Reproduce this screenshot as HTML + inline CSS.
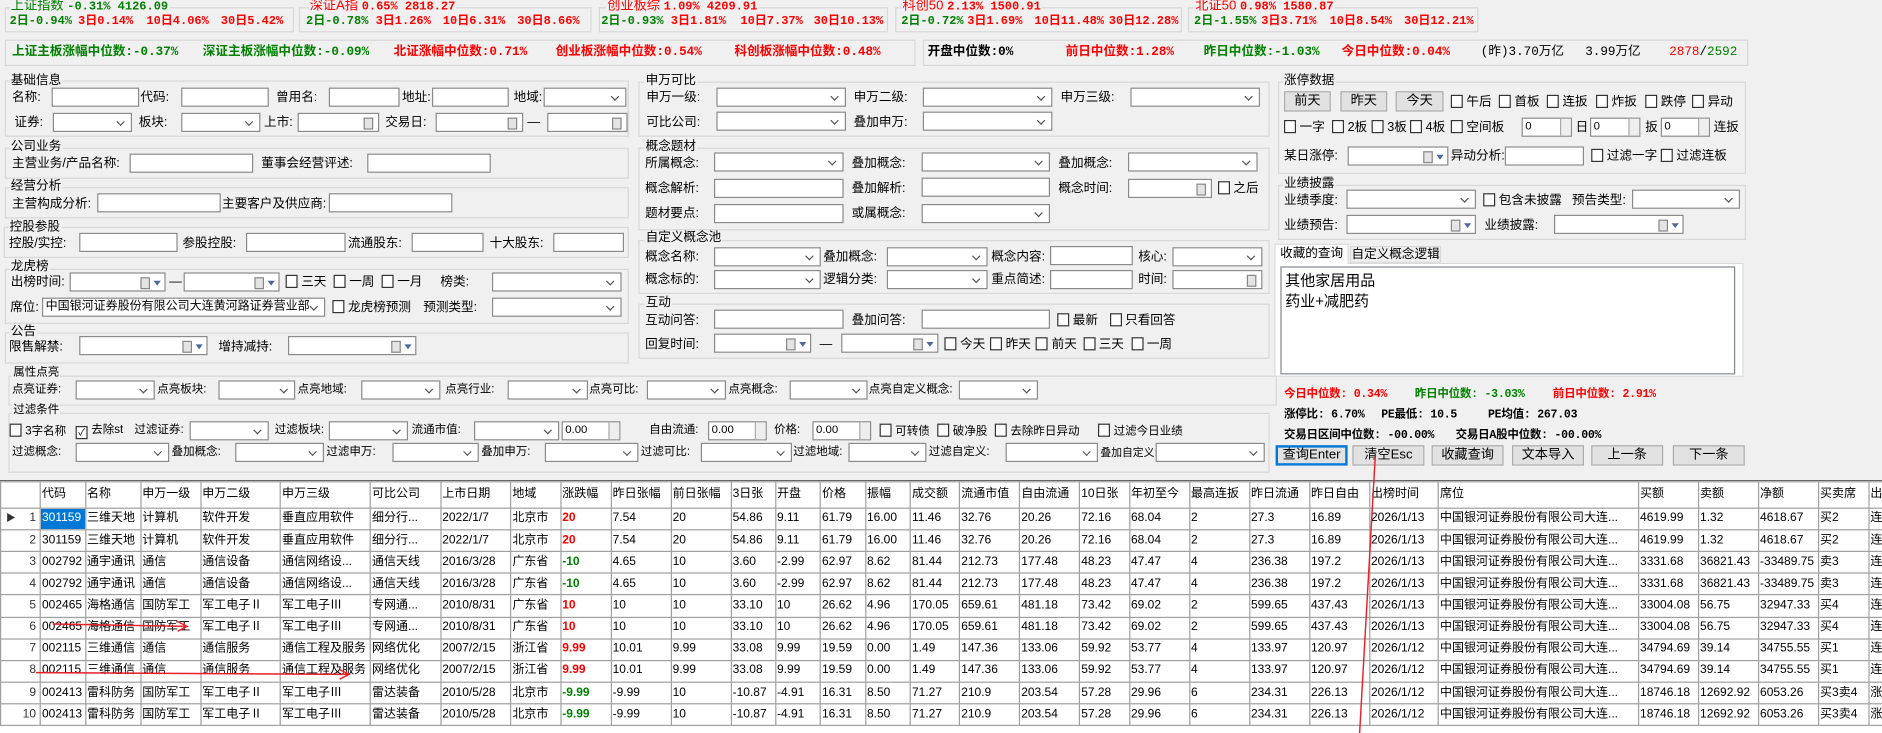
<!DOCTYPE html>
<html><head><meta charset="utf-8">
<style>
body{margin:0;background:#f0f0f0;width:1882px;height:733px;overflow:hidden;font-family:"Liberation Sans","Noto Sans CJK SC",sans-serif}
#w{position:absolute;left:0;top:0;width:1569px;height:611px;transform:scale(1.2);transform-origin:0 0;font-size:10.5px;color:#000;overflow:hidden}
#w>*{position:absolute;white-space:nowrap;box-sizing:border-box}
#w>span{line-height:12px}
.g{border:1px solid #d8d8d8}
.cap{background:#f0f0f0;padding:0 1px}
.i,.s,.d,.sp{background:#fff;border:1px solid #8a8a8a;height:16px}
.s::after{content:"";position:absolute;right:6px;top:4px;width:4px;height:4px;border-right:1px solid #555;border-bottom:1px solid #555;transform:rotate(45deg)}
.d::after{content:"";position:absolute;right:4px;top:3px;width:6px;height:8px;border:1px solid #888;background:#e4e4e4}
.dt::after{right:12px}
.dt::before{content:"";position:absolute;right:3px;top:6px;border-left:3px solid transparent;border-right:3px solid transparent;border-top:4px solid #4a6a9a}
.sp{font-size:9.5px;padding-left:2px;line-height:13px}
.sp::after{content:"";position:absolute;right:0;top:0;width:8px;height:14px;background:#eee;border-left:1px solid #aaa}
.c::before{content:"";display:inline-block;width:8px;height:9px;border:1px solid #333;background:#fff;margin-right:3px;vertical-align:-2px}
.k::before{content:"✓";font-size:8px;line-height:9px;text-align:center}
.b{background:#e1e1e1;border:1px solid #adadad;text-align:center;font-size:11px;height:17px;line-height:15px}
.m{font-family:"Liberation Mono","Noto Sans CJK SC",monospace;font-weight:bold;font-size:10px}
.r{color:#f00}.gr{color:#008000}
.st{font-family:"Liberation Mono","Noto Sans CJK SC",monospace;font-weight:bold;font-size:10.5px}
.st2{font-family:"Liberation Mono","Noto Sans CJK SC",monospace;font-weight:bold;font-size:9.6px;letter-spacing:-0.2px}
.f{font-size:9.6px}
table{border-collapse:collapse;table-layout:fixed;background:#fff;font-size:10px}
td{border:1px solid #a0a0a0;height:17.17px;padding:0 0 0 1px;overflow:hidden;white-space:nowrap;line-height:12px}
tr.h td{height:21.3px}
td.n{text-align:right;padding-right:3px;color:#333}
.sel{background:#0078d7;color:#fff}
.R{color:#f00;font-weight:bold}.G{color:#008000;font-weight:bold}
</style></head><body><div id="w">

<div class="g" style="left:4px;top:6px;width:241px;height:21px"></div>
<div class="g" style="left:249px;top:6px;width:244px;height:21px"></div>
<div class="g" style="left:499px;top:6px;width:241px;height:21px"></div>
<div class="g" style="left:746px;top:6px;width:239px;height:21px"></div>
<div class="g" style="left:990px;top:6px;width:242px;height:21px"></div>
<span class="cap gr" style="left:8px;top:-1px;font-size:11px">上证指数 <b class="m">-0.31% 4126.09</b></span>
<span class="cap r" style="left:257px;top:-1px;font-size:11px">深证A指 <b class="m">0.65% 2818.27</b></span>
<span class="cap r" style="left:505px;top:-1px;font-size:11px">创业板综 <b class="m">1.09% 4209.91</b></span>
<span class="cap r" style="left:751px;top:-1px;font-size:11px">科创50 <b class="m">2.13% 1500.91</b></span>
<span class="cap r" style="left:995px;top:-1px;font-size:11px">北证50 <b class="m">0.98% 1580.87</b></span>
<span class="m gr" style="left:8px;top:13px">2日-0.94%</span><span class="m r" style="left:65px;top:13px">3日0.14%</span><span class="m r" style="left:122px;top:13px">10日4.06%</span><span class="m r" style="left:184px;top:13px">30日5.42%</span>
<span class="m gr" style="left:255px;top:13px">2日-0.78%</span><span class="m r" style="left:313px;top:13px">3日1.26%</span><span class="m r" style="left:369px;top:13px">10日6.31%</span><span class="m r" style="left:431px;top:13px">30日8.66%</span>
<span class="m gr" style="left:501px;top:13px">2日-0.93%</span><span class="m r" style="left:559px;top:13px">3日1.81%</span><span class="m r" style="left:617px;top:13px">10日7.37%</span><span class="m r" style="left:678px;top:13px">30日10.13%</span>
<span class="m gr" style="left:751px;top:13px">2日-0.72%</span><span class="m r" style="left:806px;top:13px">3日1.69%</span><span class="m r" style="left:862px;top:13px">10日11.48%</span><span class="m r" style="left:924px;top:13px">30日12.28%</span>
<span class="m gr" style="left:995px;top:13px">2日-1.55%</span><span class="m r" style="left:1051px;top:13px">3日3.71%</span><span class="m r" style="left:1108px;top:13px">10日8.54%</span><span class="m r" style="left:1170px;top:13px">30日12.21%</span>

<div class="g" style="left:4px;top:33px;width:759px;height:22px"></div>
<div class="g" style="left:769px;top:33px;width:688px;height:22px"></div>
<span class="st gr" style="left:10px;top:38px">上证主板涨幅中位数:-0.37%</span>
<span class="st gr" style="left:169px;top:38px">深证主板涨幅中位数:-0.09%</span>
<span class="st r" style="left:328px;top:38px">北证涨幅中位数:0.71%</span>
<span class="st r" style="left:463px;top:38px">创业板涨幅中位数:0.54%</span>
<span class="st r" style="left:612px;top:38px">科创板涨幅中位数:0.48%</span>
<span class="st" style="left:773px;top:38px">开盘中位数:0%</span>
<span class="st r" style="left:888px;top:38px">前日中位数:1.28%</span>
<span class="st gr" style="left:1003px;top:38px">昨日中位数:-1.03%</span>
<span class="st r" style="left:1118px;top:38px">今日中位数:0.04%</span>
<span class="st" style="left:1234px;top:38px;font-weight:normal">(昨)3.70万亿</span>
<span class="st" style="left:1321px;top:38px;font-weight:normal">3.99万亿</span>
<span class="st" style="left:1391px;top:38px;font-weight:normal"><span class="r">2878</span>/<span class="gr">2592</span></span>

<div class="g" style="left:4px;top:67px;width:520px;height:47px"></div>
<span class="cap" style="left:8px;top:61px">基础信息</span>
<span style="left:10px;top:74.5px">名称:</span><div class="i" style="left:42.5px;top:72.5px;width:73px"></div>
<span style="left:117px;top:74.5px">代码:</span><div class="i" style="left:150.7px;top:72.5px;width:73px"></div>
<span style="left:230px;top:74.5px">曾用名:</span><div class="i" style="left:273.8px;top:72.5px;width:59px"></div>
<span style="left:335px;top:74.5px">地址:</span><div class="i" style="left:359.5px;top:72.5px;width:64px"></div>
<span style="left:428px;top:74.5px">地域:</span><div class="s" style="left:453px;top:72.5px;width:69px"></div>
<span style="left:12px;top:95.5px">证券:</span><div class="s" style="left:44px;top:93.5px;width:66px"></div>
<span style="left:115.6px;top:95.5px">板块:</span><div class="s" style="left:150.7px;top:93.5px;width:66px"></div>
<span style="left:220px;top:95.5px">上市:</span><div class="d" style="left:247.6px;top:93.5px;width:68px"></div>
<span style="left:321px;top:95.5px">交易日:</span><div class="d" style="left:363px;top:93.5px;width:73px"></div>
<span style="left:439.5px;top:95.5px">—</span><div class="d" style="left:455.8px;top:93.5px;width:67px"></div>

<div class="g" style="left:4px;top:123px;width:520px;height:26px"></div>
<span class="cap" style="left:8px;top:116px">公司业务</span>
<span style="left:10px;top:130px">主营业务/产品名称:</span><div class="i" style="left:108px;top:128px;width:103px"></div>
<span style="left:217.7px;top:130px">董事会经营评述:</span><div class="i" style="left:306px;top:128px;width:103px"></div>

<div class="g" style="left:4px;top:156px;width:520px;height:26px"></div>
<span class="cap" style="left:8px;top:149px">经营分析</span>
<span style="left:10px;top:163.5px">主营构成分析:</span><div class="i" style="left:80.6px;top:161px;width:103px"></div>
<span style="left:185px;top:163.5px">主要客户及供应商:</span><div class="i" style="left:273.8px;top:161px;width:103px"></div>

<div class="g" style="left:3px;top:189px;width:521px;height:26px"></div>
<span class="cap" style="left:7px;top:182.5px">控股参股</span>
<span style="left:7.5px;top:196.5px">控股/实控:</span><div class="i" style="left:66.3px;top:194px;width:82px"></div>
<span style="left:152px;top:196.5px">参股控股:</span><div class="i" style="left:205px;top:194px;width:83px"></div>
<span style="left:290px;top:196.5px">流通股东:</span><div class="i" style="left:342.5px;top:194px;width:60px"></div>
<span style="left:408px;top:196.5px">十大股东:</span><div class="i" style="left:461px;top:194px;width:59px"></div>

<div class="g" style="left:4px;top:223.5px;width:520px;height:46px"></div>
<span class="cap" style="left:8px;top:216px">龙虎榜</span>
<span style="left:9px;top:229px">出榜时间:</span><div class="d dt" style="left:57.8px;top:226.7px;width:80.6px"></div>
<span style="left:141px;top:229px">—</span><div class="d dt" style="left:152.7px;top:226.7px;width:80.6px"></div>
<span class="c" style="left:238px;top:229px">三天</span><span class="c" style="left:278px;top:229px">一周</span><span class="c" style="left:318px;top:229px">一月</span>
<span style="left:367px;top:229px">榜类:</span><div class="s" style="left:410px;top:227px;width:107.7px"></div>
<span style="left:8.5px;top:250px">席位:</span><div class="s" style="left:35px;top:248px;width:236px;font-size:10px;line-height:14px;padding-left:2px">中国银河证券股份有限公司大连黄河路证券营业部</div>
<span class="c" style="left:277px;top:250px">龙虎榜预测</span>
<span style="left:352.7px;top:250px">预测类型:</span><div class="s" style="left:410px;top:248px;width:107.7px"></div>

<div class="g" style="left:4px;top:277px;width:520px;height:26px"></div>
<span class="cap" style="left:8px;top:270px">公告</span>
<span style="left:7.5px;top:282.5px">限售解禁:</span><div class="d dt" style="left:66.3px;top:280px;width:107px"></div>
<span style="left:182px;top:282.5px">增持减持:</span><div class="d dt" style="left:239.8px;top:280px;width:107px"></div>

<div class="g" style="left:532px;top:68px;width:526px;height:46px"></div>
<span class="cap" style="left:537px;top:61px">申万可比</span>
<span style="left:538.6px;top:74.5px">申万一级:</span><div class="s" style="left:597px;top:72.5px;width:107.6px"></div>
<span style="left:711.4px;top:74.5px">申万二级:</span><div class="s" style="left:769px;top:72.5px;width:108px"></div>
<span style="left:883.8px;top:74.5px">申万三级:</span><div class="s" style="left:941.7px;top:72.5px;width:108px"></div>
<span style="left:538.6px;top:95.5px">可比公司:</span><div class="s" style="left:597px;top:93px;width:107.6px"></div>
<span style="left:711.4px;top:95.5px">叠加申万:</span><div class="s" style="left:769px;top:93px;width:108px"></div>

<div class="g" style="left:532px;top:123px;width:526px;height:69px"></div>
<span class="cap" style="left:537px;top:116px">概念题材</span>
<span style="left:537.6px;top:129.5px">所属概念:</span><div class="s" style="left:595px;top:127px;width:107.6px"></div>
<span style="left:709.7px;top:129.5px">叠加概念:</span><div class="s" style="left:767.5px;top:127px;width:107.8px"></div>
<span style="left:882px;top:129.5px">叠加概念:</span><div class="s" style="left:940px;top:127px;width:108px"></div>
<span style="left:537.6px;top:151px">概念解析:</span><div class="i" style="left:595px;top:149px;width:107.6px"></div>
<span style="left:709.7px;top:151px">叠加解析:</span><div class="i" style="left:767.5px;top:148px;width:107.8px"></div>
<span style="left:882px;top:151px">概念时间:</span><div class="d" style="left:940px;top:149px;width:70px"></div>
<span class="c" style="left:1014.8px;top:151px">之后</span>
<span style="left:537.6px;top:172px">题材要点:</span><div class="i" style="left:595px;top:170px;width:107.6px"></div>
<span style="left:709.7px;top:172px">或属概念:</span><div class="s" style="left:767.5px;top:170px;width:107.8px"></div>

<div class="g" style="left:532px;top:199.5px;width:526px;height:45px"></div>
<span class="cap" style="left:537px;top:192px">自定义概念池</span>
<span style="left:537.6px;top:207.5px">概念名称:</span><div class="s" style="left:595px;top:205.6px;width:88.5px"></div>
<span style="left:686px;top:207.5px">叠加概念:</span><div class="s" style="left:739px;top:205.6px;width:84px"></div>
<span style="left:826px;top:207.5px">概念内容:</span><div class="i" style="left:875.3px;top:205px;width:69px"></div>
<span style="left:948.5px;top:207.5px">核心:</span><div class="s" style="left:976.7px;top:205.6px;width:75px"></div>
<span style="left:537.6px;top:227px">概念标的:</span><div class="s" style="left:595px;top:225px;width:88.5px"></div>
<span style="left:686px;top:227px">逻辑分类:</span><div class="s" style="left:739px;top:225px;width:84px"></div>
<span style="left:826px;top:227px">重点简述:</span><div class="i" style="left:875.3px;top:224.5px;width:69px"></div>
<span style="left:948.5px;top:227px">时间:</span><div class="d" style="left:976.7px;top:225px;width:75px"></div>

<div class="g" style="left:532px;top:253px;width:526px;height:46px"></div>
<span class="cap" style="left:537px;top:245.5px">互动</span>
<span style="left:537.6px;top:260.5px">互动问答:</span><div class="i" style="left:595px;top:258px;width:107.6px"></div>
<span style="left:709.7px;top:260.5px">叠加问答:</span><div class="i" style="left:767.5px;top:258px;width:107.8px"></div>
<span class="c" style="left:881px;top:260.5px">最新</span><span class="c" style="left:924.6px;top:260.5px">只看回答</span>
<span style="left:537.6px;top:280.5px">回复时间:</span><div class="d dt" style="left:595px;top:278.3px;width:81px"></div>
<span style="left:683px;top:280.5px">—</span><div class="d dt" style="left:701px;top:278.3px;width:81px"></div>
<span class="c" style="left:787px;top:280.5px">今天</span><span class="c" style="left:825px;top:280.5px">昨天</span><span class="c" style="left:863.4px;top:280.5px">前天</span><span class="c" style="left:902.6px;top:280.5px">三天</span><span class="c" style="left:942.7px;top:280.5px">一周</span>

<div class="g" style="left:1065px;top:68px;width:390px;height:77px"></div>
<span class="cap" style="left:1069px;top:61px">涨停数据</span>
<div class="b" style="left:1070px;top:76.4px;width:39px">前天</div>
<div class="b" style="left:1117px;top:76.4px;width:39px">昨天</div>
<div class="b" style="left:1163px;top:76.4px;width:40px">今天</div>
<span class="c" style="left:1209px;top:79px">午后</span><span class="c" style="left:1249px;top:79px">首板</span><span class="c" style="left:1289px;top:79px">连扳</span><span class="c" style="left:1330px;top:79px">炸扳</span><span class="c" style="left:1371px;top:79px">跌停</span><span class="c" style="left:1410px;top:79px">异动</span>
<span class="c" style="left:1070px;top:99.6px">一字</span><span class="c" style="left:1110px;top:99.6px">2板</span><span class="c" style="left:1143px;top:99.6px">3板</span><span class="c" style="left:1175px;top:99.6px">4板</span><span class="c" style="left:1209px;top:99.6px">空间板</span>
<div class="sp" style="left:1268px;top:97.8px;width:42px">0</div><span style="left:1313px;top:99.6px">日</span>
<div class="sp" style="left:1325px;top:97.8px;width:42px">0</div><span style="left:1371px;top:99.6px">扳</span>
<div class="sp" style="left:1384px;top:97.8px;width:41px">0</div><span style="left:1428px;top:99.6px">连扳</span>
<span style="left:1070px;top:124px">某日涨停:</span><div class="d dt" style="left:1123px;top:121.7px;width:84px"></div>
<span style="left:1209px;top:124px">异动分析:</span><div class="i" style="left:1254px;top:121.7px;width:66px"></div>
<span class="c" style="left:1326px;top:124px">过滤一字</span><span class="c" style="left:1384px;top:124px">过滤连板</span>

<div class="g" style="left:1065px;top:154px;width:390px;height:46px"></div>
<span class="cap" style="left:1069px;top:146.5px">业绩披露</span>
<span style="left:1070px;top:160.5px">业绩季度:</span><div class="s" style="left:1122px;top:158px;width:108px"></div>
<span class="c" style="left:1236px;top:160.5px">包含未披露</span>
<span style="left:1310px;top:160.5px">预告类型:</span><div class="s" style="left:1360px;top:158px;width:90px"></div>
<span style="left:1070px;top:181.5px">业绩预告:</span><div class="d dt" style="left:1122px;top:179px;width:108px"></div>
<span style="left:1237px;top:181.5px">业绩披露:</span><div class="d dt" style="left:1295px;top:179px;width:108px"></div>

<div style="left:1062px;top:218.6px;width:391px;height:95px;background:#fff;border:1px solid #d9d9d9"></div>
<div style="left:1062px;top:202.8px;width:62px;height:17px;background:#fff;border:1px solid #d9d9d9;border-bottom:none;text-align:center;line-height:15px">收藏的查询</div>
<div style="left:1125px;top:204.5px;width:76px;height:14.5px;background:#f0f0f0;border:1px solid #d9d9d9;text-align:center;line-height:13px">自定义概念逻辑</div>
<div style="left:1067px;top:222px;width:379px;height:90px;background:#fff;border:1px solid #828790"></div>
<span style="left:1071px;top:227px;font-size:12.5px;line-height:14px">其他家居用品</span>
<span style="left:1071px;top:244px;font-size:12.5px;line-height:14px">药业+减肥药</span>

<span class="st2 r" style="left:1070px;top:323px">今日中位数: 0.34%</span>
<span class="st2 gr" style="left:1179px;top:323px">昨日中位数: -3.03%</span>
<span class="st2 r" style="left:1294px;top:323px">前日中位数: 2.91%</span>
<span class="st2" style="left:1070px;top:340px">涨停比: 6.70%</span>
<span class="st2" style="left:1151px;top:340px">PE最低: 10.5</span>
<span class="st2" style="left:1240px;top:340px">PE均值: 267.03</span>
<span class="st2" style="left:1070px;top:356.5px">交易日区间中位数: -00.00%</span>
<span class="st2" style="left:1213px;top:356.5px">交易日A股中位数: -00.00%</span>
<div class="b" style="left:1063px;top:371.4px;width:60px;border:2px solid #0078d7;line-height:13px">查询Enter</div>
<div class="b" style="left:1127px;top:371.4px;width:60px">清空Esc</div>
<div class="b" style="left:1193px;top:371.4px;width:60px">收藏查询</div>
<div class="b" style="left:1260px;top:371.4px;width:60px">文本导入</div>
<div class="b" style="left:1326px;top:371.4px;width:60px">上一条</div>
<div class="b" style="left:1394px;top:371.4px;width:60px">下一条</div>

<div class="g" style="left:7px;top:312.5px;width:1057px;height:25px"></div>
<span class="cap f" style="left:10px;top:305px">属性点亮</span>
<span class="f" style="left:10px;top:319px">点亮证券:</span><div class="s" style="left:63px;top:316.7px;width:66px"></div>
<span class="f" style="left:131px;top:319px">点亮板块:</span><div class="s" style="left:182px;top:316.7px;width:64px"></div>
<span class="f" style="left:248px;top:319px">点亮地域:</span><div class="s" style="left:301px;top:316.7px;width:66px"></div>
<span class="f" style="left:371px;top:319px">点亮行业:</span><div class="s" style="left:423px;top:316.7px;width:67px"></div>
<span class="f" style="left:491px;top:319px">点亮可比:</span><div class="s" style="left:539px;top:316.7px;width:66px"></div>
<span class="f" style="left:607px;top:319px">点亮概念:</span><div class="s" style="left:658px;top:316.7px;width:65px"></div>
<span class="f" style="left:724px;top:319px">点亮自定义概念:</span><div class="s" style="left:799px;top:316.7px;width:66px"></div>

<div class="g" style="left:7px;top:343.6px;width:1051px;height:50px"></div>
<span class="cap f" style="left:10px;top:336px">过滤条件</span>
<span class="c f" style="left:8px;top:353px">3字名称</span>
<span class="c k f" style="left:63px;top:353px">去除st</span>
<span class="f" style="left:112px;top:353px">过滤证券:</span><div class="s" style="left:158px;top:351.3px;width:66px"></div>
<span class="f" style="left:229px;top:353px">过滤板块:</span><div class="s" style="left:274px;top:351.3px;width:66px"></div>
<span class="f" style="left:343px;top:353px">流通市值:</span><div class="s" style="left:395px;top:351.3px;width:71px"></div>
<div class="sp" style="left:468px;top:351.3px;width:49px">0.00</div>
<span class="f" style="left:541px;top:353px">自由流通:</span><div class="sp" style="left:590px;top:351.3px;width:49px">0.00</div>
<span class="f" style="left:645px;top:353px">价格:</span><div class="sp" style="left:677px;top:351.3px;width:49px">0.00</div>
<span class="c f" style="left:733px;top:353px">可转债</span>
<span class="c f" style="left:781px;top:353px">破净股</span>
<span class="c f" style="left:829px;top:353px">去除昨日异动</span>
<span class="c f" style="left:915px;top:353px">过滤今日业绩</span>
<span class="f" style="left:10px;top:371px">过滤概念:</span><div class="s" style="left:63px;top:369px;width:78px"></div>
<span class="f" style="left:143px;top:371px">叠加概念:</span><div class="s" style="left:196px;top:369px;width:74px"></div>
<span class="f" style="left:272px;top:371px">过滤申万:</span><div class="s" style="left:327px;top:369px;width:72px"></div>
<span class="f" style="left:401px;top:371px">叠加申万:</span><div class="s" style="left:454px;top:369px;width:78px"></div>
<span class="f" style="left:534px;top:371px">过滤可比:</span><div class="s" style="left:584px;top:369px;width:76px"></div>
<span class="f" style="left:661px;top:371px">过滤地域:</span><div class="s" style="left:707px;top:369px;width:65px"></div>
<span class="f" style="left:774px;top:371px">过滤自定义:</span><div class="s" style="left:838px;top:369px;width:77px"></div>
<span class="f" style="left:917px;top:371px;font-size:9px">叠加自定义:</span><div class="s" style="left:963px;top:369px;width:91px"></div>

<div style="left:0;top:399.5px;width:1569px;height:212px;overflow:hidden;background:#fff;border-top:1px solid #666">
<table style="width:1577px">
<colgroup><col style="width:33px"><col style="width:37.5px"><col style="width:46px"><col style="width:50px"><col style="width:66.5px"><col style="width:75px"><col style="width:58.5px"><col style="width:58.5px"><col style="width:41.5px"><col style="width:42px"><col style="width:50px"><col style="width:50px"><col style="width:37px"><col style="width:37.5px"><col style="width:37.5px"><col style="width:37.5px"><col style="width:41px"><col style="width:50px"><col style="width:50px"><col style="width:41.5px"><col style="width:50px"><col style="width:50px"><col style="width:50px"><col style="width:50px"><col style="width:57.5px"><col style="width:166.7px"><col style="width:50px"><col style="width:50px"><col style="width:50px"><col style="width:42px"><col style="width:20.3px"></colgroup>
<tr class="h"><td></td><td>代码</td><td>名称</td><td>申万一级</td><td>申万二级</td><td>申万三级</td><td>可比公司</td><td>上市日期</td><td>地域</td><td>涨跌幅</td><td>昨日张幅</td><td>前日张幅</td><td>3日张</td><td>开盘</td><td>价格</td><td>振幅</td><td>成交额</td><td>流通市值</td><td>自由流通</td><td>10日张</td><td>年初至今</td><td>最高连扳</td><td>昨日流通</td><td>昨日自由</td><td>出榜时间</td><td>席位</td><td>买额</td><td>卖额</td><td>净额</td><td>买卖席</td><td>出</td></tr>
<tr><td class="n"><span style="float:left;padding-left:3px;font-size:8px">▶</span>1</td><td class="sel">301159</td><td>三维天地</td><td>计算机</td><td>软件开发</td><td>垂直应用软件</td><td>细分行...</td><td>2022/1/7</td><td>北京市</td><td class="R">20</td><td>7.54</td><td>20</td><td>54.86</td><td>9.11</td><td>61.79</td><td>16.00</td><td>11.46</td><td>32.76</td><td>20.26</td><td>72.16</td><td>68.04</td><td>2</td><td>27.3</td><td>16.89</td><td>2026/1/13</td><td>中国银河证券股份有限公司大连...</td><td>4619.99</td><td>1.32</td><td>4618.67</td><td>买2</td><td>连</td></tr>
<tr><td class="n">2</td><td>301159</td><td>三维天地</td><td>计算机</td><td>软件开发</td><td>垂直应用软件</td><td>细分行...</td><td>2022/1/7</td><td>北京市</td><td class="R">20</td><td>7.54</td><td>20</td><td>54.86</td><td>9.11</td><td>61.79</td><td>16.00</td><td>11.46</td><td>32.76</td><td>20.26</td><td>72.16</td><td>68.04</td><td>2</td><td>27.3</td><td>16.89</td><td>2026/1/13</td><td>中国银河证券股份有限公司大连...</td><td>4619.99</td><td>1.32</td><td>4618.67</td><td>买2</td><td>连</td></tr>
<tr><td class="n">3</td><td>002792</td><td>通宇通讯</td><td>通信</td><td>通信设备</td><td>通信网络设...</td><td>通信天线</td><td>2016/3/28</td><td>广东省</td><td class="G">-10</td><td>4.65</td><td>10</td><td>3.60</td><td>-2.99</td><td>62.97</td><td>8.62</td><td>81.44</td><td>212.73</td><td>177.48</td><td>48.23</td><td>47.47</td><td>4</td><td>236.38</td><td>197.2</td><td>2026/1/13</td><td>中国银河证券股份有限公司大连...</td><td>3331.68</td><td>36821.43</td><td>-33489.75</td><td>卖3</td><td>连</td></tr>
<tr><td class="n">4</td><td>002792</td><td>通宇通讯</td><td>通信</td><td>通信设备</td><td>通信网络设...</td><td>通信天线</td><td>2016/3/28</td><td>广东省</td><td class="G">-10</td><td>4.65</td><td>10</td><td>3.60</td><td>-2.99</td><td>62.97</td><td>8.62</td><td>81.44</td><td>212.73</td><td>177.48</td><td>48.23</td><td>47.47</td><td>4</td><td>236.38</td><td>197.2</td><td>2026/1/13</td><td>中国银河证券股份有限公司大连...</td><td>3331.68</td><td>36821.43</td><td>-33489.75</td><td>卖3</td><td>连</td></tr>
<tr><td class="n">5</td><td>002465</td><td>海格通信</td><td>国防军工</td><td>军工电子Ⅱ</td><td>军工电子Ⅲ</td><td>专网通...</td><td>2010/8/31</td><td>广东省</td><td class="R">10</td><td>10</td><td>10</td><td>33.10</td><td>10</td><td>26.62</td><td>4.96</td><td>170.05</td><td>659.61</td><td>481.18</td><td>73.42</td><td>69.02</td><td>2</td><td>599.65</td><td>437.43</td><td>2026/1/13</td><td>中国银河证券股份有限公司大连...</td><td>33004.08</td><td>56.75</td><td>32947.33</td><td>买4</td><td>连</td></tr>
<tr><td class="n">6</td><td>002465</td><td>海格通信</td><td>国防军工</td><td>军工电子Ⅱ</td><td>军工电子Ⅲ</td><td>专网通...</td><td>2010/8/31</td><td>广东省</td><td class="R">10</td><td>10</td><td>10</td><td>33.10</td><td>10</td><td>26.62</td><td>4.96</td><td>170.05</td><td>659.61</td><td>481.18</td><td>73.42</td><td>69.02</td><td>2</td><td>599.65</td><td>437.43</td><td>2026/1/13</td><td>中国银河证券股份有限公司大连...</td><td>33004.08</td><td>56.75</td><td>32947.33</td><td>买4</td><td>连</td></tr>
<tr><td class="n">7</td><td>002115</td><td>三维通信</td><td>通信</td><td>通信服务</td><td>通信工程及服务</td><td>网络优化</td><td>2007/2/15</td><td>浙江省</td><td class="R">9.99</td><td>10.01</td><td>9.99</td><td>33.08</td><td>9.99</td><td>19.59</td><td>0.00</td><td>1.49</td><td>147.36</td><td>133.06</td><td>59.92</td><td>53.77</td><td>4</td><td>133.97</td><td>120.97</td><td>2026/1/12</td><td>中国银河证券股份有限公司大连...</td><td>34794.69</td><td>39.14</td><td>34755.55</td><td>买1</td><td>连</td></tr>
<tr><td class="n">8</td><td>002115</td><td>三维通信</td><td>通信</td><td>通信服务</td><td>通信工程及服务</td><td>网络优化</td><td>2007/2/15</td><td>浙江省</td><td class="R">9.99</td><td>10.01</td><td>9.99</td><td>33.08</td><td>9.99</td><td>19.59</td><td>0.00</td><td>1.49</td><td>147.36</td><td>133.06</td><td>59.92</td><td>53.77</td><td>4</td><td>133.97</td><td>120.97</td><td>2026/1/12</td><td>中国银河证券股份有限公司大连...</td><td>34794.69</td><td>39.14</td><td>34755.55</td><td>买1</td><td>连</td></tr>
<tr><td class="n">9</td><td>002413</td><td>雷科防务</td><td>国防军工</td><td>军工电子Ⅱ</td><td>军工电子Ⅲ</td><td>雷达装备</td><td>2010/5/28</td><td>北京市</td><td class="G">-9.99</td><td>-9.99</td><td>10</td><td>-10.87</td><td>-4.91</td><td>16.31</td><td>8.50</td><td>71.27</td><td>210.9</td><td>203.54</td><td>57.28</td><td>29.96</td><td>6</td><td>234.31</td><td>226.13</td><td>2026/1/12</td><td>中国银河证券股份有限公司大连...</td><td>18746.18</td><td>12692.92</td><td>6053.26</td><td>买3卖4</td><td>涨</td></tr>
<tr><td class="n">10</td><td>002413</td><td>雷科防务</td><td>国防军工</td><td>军工电子Ⅱ</td><td>军工电子Ⅲ</td><td>雷达装备</td><td>2010/5/28</td><td>北京市</td><td class="G">-9.99</td><td>-9.99</td><td>10</td><td>-10.87</td><td>-4.91</td><td>16.31</td><td>8.50</td><td>71.27</td><td>210.9</td><td>203.54</td><td>57.28</td><td>29.96</td><td>6</td><td>234.31</td><td>226.13</td><td>2026/1/12</td><td>中国银河证券股份有限公司大连...</td><td>18746.18</td><td>12692.92</td><td>6053.26</td><td>买3卖4</td><td>涨</td></tr>
</table></div>

<svg style="left:0;top:0" width="1569" height="611" viewBox="0 0 1569 611">
<g stroke="#e8202a" stroke-width="1.2" fill="none">
<path d="M44 520 L155 522 M148 518 L156 522 L148 526"/>
<path d="M30 560.5 L290 562 M283 558 L291 562 L283 566"/>
<path d="M1146 381 L1133 611"/>
</g></svg>
</div></body></html>
